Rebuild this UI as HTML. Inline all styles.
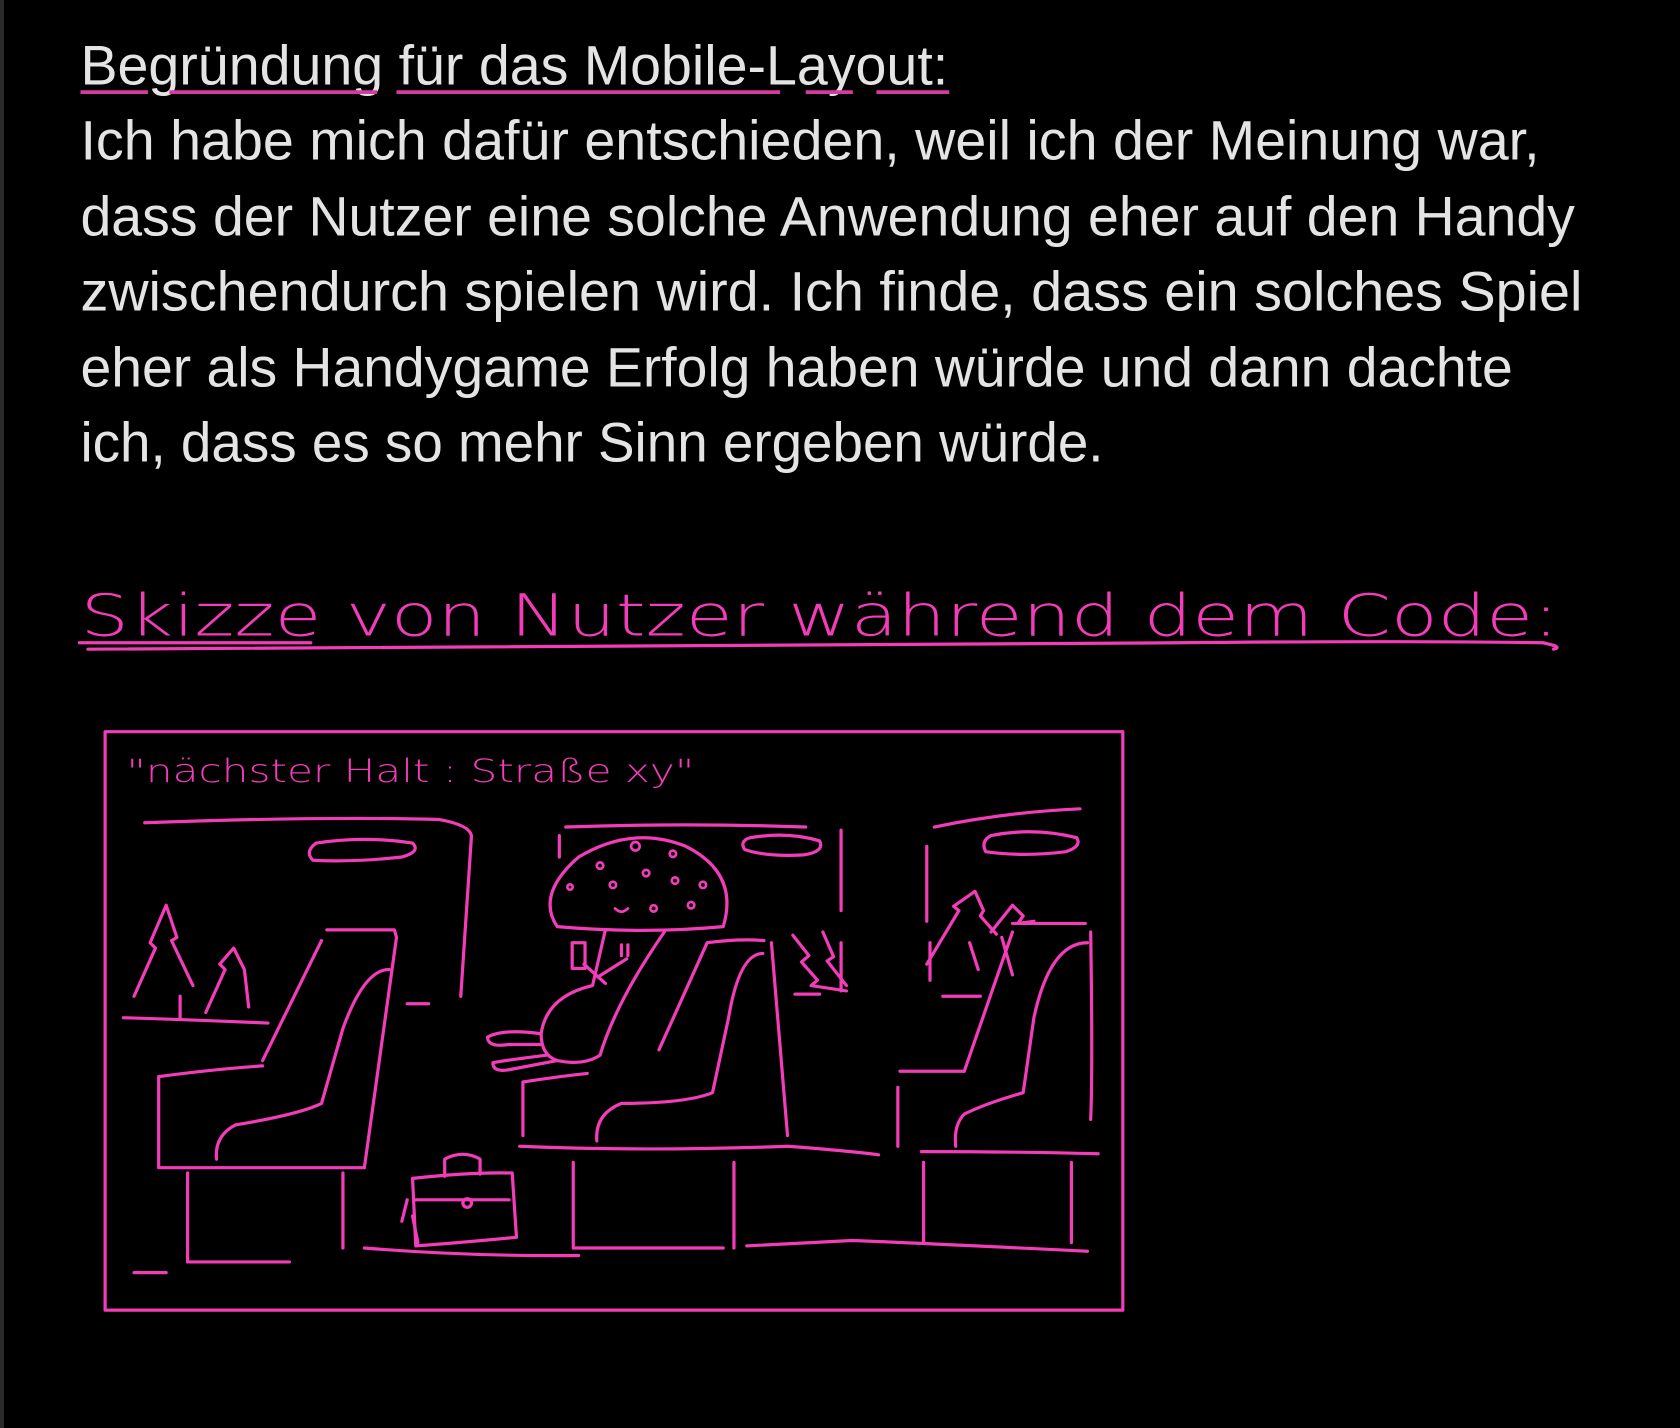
<!DOCTYPE html>
<html><head><meta charset="utf-8"><style>
html,body{margin:0;padding:0;background:#000;}
body{width:1680px;height:1428px;overflow:hidden;position:relative;}
.bar{position:absolute;left:0;top:0;width:4px;height:1428px;background:#2a2a2a;}
svg{position:absolute;left:0;top:0;}
</style></head><body>
<div class="bar"></div>
<svg width="1680" height="1428" viewBox="0 0 1568 1333" xmlns="http://www.w3.org/2000/svg">
<g font-family="Liberation Sans, sans-serif" font-size="52" fill="#e4e4e4">
<text x="75" y="79" textLength="810" lengthAdjust="spacingAndGlyphs">Begründung für das Mobile-Layout:</text>
<text x="75" y="149" textLength="1362" lengthAdjust="spacingAndGlyphs">Ich habe mich dafür entschieden, weil ich der Meinung war,</text>
<text x="75" y="220" textLength="1395" lengthAdjust="spacingAndGlyphs">dass der Nutzer eine solche Anwendung eher auf den Handy</text>
<text x="75" y="290" textLength="1402" lengthAdjust="spacingAndGlyphs">zwischendurch spielen wird. Ich finde, dass ein solches Spiel</text>
<text x="75" y="361" textLength="1337" lengthAdjust="spacingAndGlyphs">eher als Handygame Erfolg haben würde und dann dachte</text>
<text x="75" y="431" textLength="955" lengthAdjust="spacingAndGlyphs">ich, dass es so mehr Sinn ergeben würde.</text>
</g>
<g stroke="#d63aa0" stroke-width="3.5" fill="none">
<path d="M75 86 H138 M158 86 H352 M370 86 H728 M752 86 H796 M818 86 H886"/>
</g>
<g fill="none" stroke="#f23cb8" stroke-width="3" stroke-linecap="round" stroke-linejoin="round">
<path d="M82 606 Q700 602 1100 600 Q1300 598 1440 600 Q1460 604 1450 606"/>
<path d="M74 600 H290"/>
<rect x="98" y="683" width="950" height="540"/>
<path d="M135 768 Q300 762 410 765 Q438 770 440 780 L430 930"/>
<path d="M295 787 Q340 780 385 787 Q393 795 375 800 Q330 805 292 803 Q284 795 295 787Z"/>
<path d="M125 930 L145 885 L140 880 L155 845 L165 875 L160 878 L180 920 M168 930 V950"/>
<path d="M192 945 L210 905 L205 900 L218 885 L228 905 L232 940"/>
<path d="M115 950 Q180 952 250 955"/>
<path d="M380 937 H400"/>
<path d="M305 868 H368 L370 875 L340 1090"/>
<path d="M245 990 L300 878"/>
<path d="M363 905 Q340 905 320 960 L300 1030 Q280 1040 220 1050 Q200 1060 202 1082"/>
<path d="M148 1005 Q200 998 245 995 M148 1005 V1090 H340"/>
<path d="M175 1095 V1178 H270 M320 1095 V1165 M125 1188 H155"/>
<path d="M385 1100 Q440 1094 478 1095 L482 1155 Q430 1160 388 1163 Z M388 1120 H475 M415 1098 V1082 Q432 1073 448 1082 V1096"/>
<circle cx="436" cy="1123" r="4"/>
<path d="M380 1120 L375 1140 M385 1135 L390 1160"/>
<path d="M340 1165 Q440 1173 540 1172"/>
<path d="M528 772 Q640 768 752 772 M522 780 V800 M785 775 V850 M785 880 V925"/>
<path d="M700 782 Q735 776 765 785 Q770 795 750 798 Q715 800 695 793 Q690 785 700 782Z"/>
<path d="M520 865 Q500 835 540 800 Q590 770 640 790 Q690 815 675 865 Q600 872 520 865Z"/>
<g stroke-width="2.5">
<circle cx="593" cy="790" r="4"/><circle cx="560" cy="808" r="3"/><circle cx="603" cy="815" r="3"/><circle cx="628" cy="797" r="3"/>
<circle cx="532" cy="828" r="2.5"/><circle cx="572" cy="826" r="3"/><circle cx="630" cy="822" r="3"/><circle cx="656" cy="826" r="3"/>
<circle cx="610" cy="848" r="3"/><circle cx="645" cy="845" r="3"/>
<path d="M574 848 Q580 854 586 848"/>
</g>
<path d="M565 868 L553 920 Q510 930 505 965 Q505 985 520 990 Q545 995 560 985 Q575 935 620 870"/>
<rect x="534" y="880" width="12" height="24"/>
<path d="M580 882 V892 M586 882 V892 M545 900 L565 918 M558 912 L585 895"/>
<path d="M505 965 Q470 960 455 968 Q455 978 475 975 L505 975 M510 985 Q470 990 460 992 Q460 1002 478 998 L520 990"/>
<path d="M660 880 Q690 876 713 878 M615 980 L660 880 M712 890 Q690 890 680 950 L665 1020 Q640 1030 580 1030 Q555 1040 557 1065"/>
<path d="M720 880 L735 1060 M488 1010 V1060 M488 1010 Q520 1005 548 1002"/>
<path d="M485 1070 Q600 1075 735 1070 Q800 1075 820 1078"/>
<path d="M535 1085 V1165 H675 M685 1085 V1165 M697 1163 Q760 1160 795 1158 Q850 1160 1015 1168"/>
<path d="M740 873 L755 892 L748 898 L763 915 L757 920 L790 925 M768 870 L778 893 L772 897 L790 920 M742 928 H765"/>
<path d="M872 772 Q940 758 1008 755 M865 790 V860 M868 880 V915"/>
<path d="M925 780 Q965 772 1005 782 Q1010 790 995 795 Q955 800 920 795 Q915 785 925 780Z"/>
<path d="M865 900 L895 850 L890 846 L910 832 L918 850 L915 855 L930 872 M925 870 L945 845 L955 855 L950 862 L965 860 M935 875 L945 910 M905 880 L913 905 M880 930 H915"/>
<path d="M945 862 H1013 M900 1000 L945 870 M1018 870 Q1020 1000 1018 1045 M1015 880 Q980 880 965 950 L955 1020 Q920 1030 900 1040 Q890 1050 892 1070"/>
<path d="M840 1000 H900 M838 1015 V1070 M860 1075 Q950 1075 1025 1077"/>
<path d="M862 1085 V1160 M1000 1085 V1160"/>
</g>
<g font-family="DejaVu Sans, sans-serif" font-weight="200" fill="#f23cb8">
<text x="75" y="593" font-size="54" textLength="1380" lengthAdjust="spacingAndGlyphs">Skizze von Nutzer während dem Code:</text>
<text x="118" y="730" font-size="30" textLength="530" lengthAdjust="spacingAndGlyphs">"nächster Halt : Straße xy"</text>
</g>
</svg>
</body></html>
